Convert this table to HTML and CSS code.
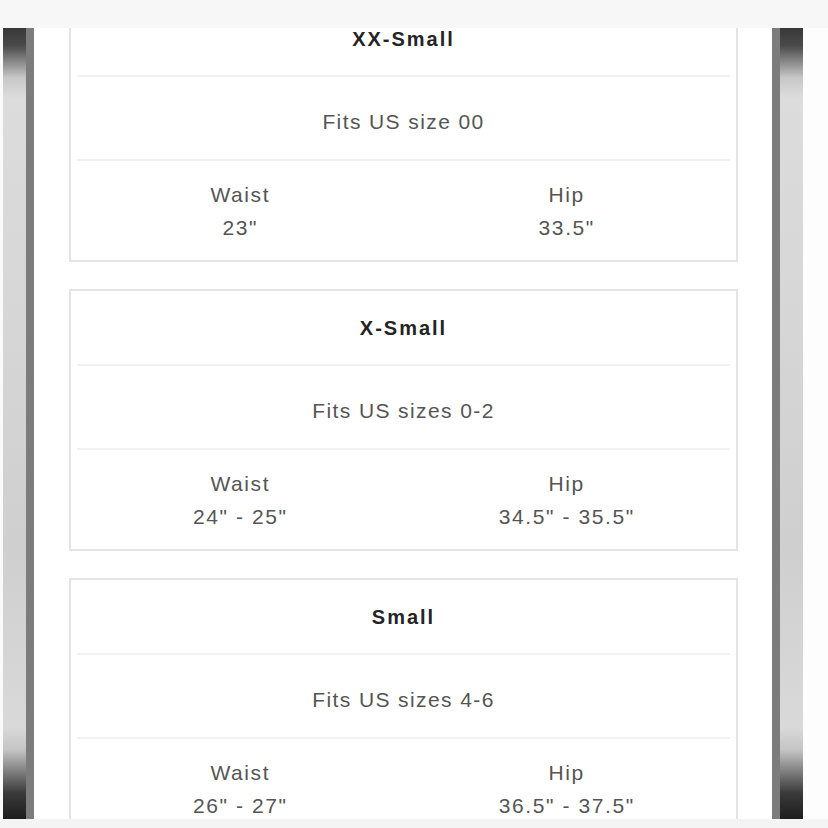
FILE: index.html
```html
<!DOCTYPE html>
<html lang="en">
<head>
<meta charset="utf-8">
<title>Size chart</title>
<link rel="stylesheet" href="styles.css">
</head>
<body>
<div class="topband"></div>
<div class="frame">
  <div class="edge"></div>
  <div class="bezel"></div>
  <div class="strip"></div>
  <div class="screen">
    <div class="cards">
      <section class="card">
        <h2 class="card-title">XX-Small</h2>
        <div class="fits">Fits US size 00</div>
        <div class="measures">
          <div class="measure"><span>Waist</span><span>23"</span></div>
          <div class="measure"><span>Hip</span><span>33.5"</span></div>
        </div>
      </section>
      <section class="card">
        <h2 class="card-title">X-Small</h2>
        <div class="fits">Fits US sizes 0-2</div>
        <div class="measures">
          <div class="measure"><span>Waist</span><span>24" - 25"</span></div>
          <div class="measure"><span>Hip</span><span>34.5" - 35.5"</span></div>
        </div>
      </section>
      <section class="card">
        <h2 class="card-title">Small</h2>
        <div class="fits">Fits US sizes 4-6</div>
        <div class="measures">
          <div class="measure"><span>Waist</span><span>26" - 27"</span></div>
          <div class="measure"><span>Hip</span><span>36.5" - 37.5"</span></div>
        </div>
      </section>
    </div>
  </div>
  <div class="strip"></div>
  <div class="bezel"></div>
  <div class="edge-right"></div>
</div>
<div class="bottomband"></div>
</body>
</html>
```
FILE: styles.css
```css
* { box-sizing: border-box; }
html, body { margin: 0; padding: 0; }
body {
  background: #ffffff;
  font-family: "Liberation Sans", Arial, sans-serif;
  width: 828px;
  height: 828px;
  overflow: hidden;
}
.topband {
  height: 28px;
  background: #f7f7f7;
}
.bottomband {
  height: 9px;
  background: #f4f4f4;
}
.frame {
  display: flex;
  height: 791px;
  overflow: hidden;
}
.edge { width: 3px; background: #fafafa; }
.edge-right { flex: 1; background: #fdfdfd; }
.bezel {
  width: 23px;
  background: linear-gradient(to bottom,
    #383838 0px, #4a4a4a 18px, #8a8a8a 34px, #c8c8c8 50px, #dcdcdc 70px,
    #d6d6d6 300px, #cfcfcf 520px, #d9d9d9 700px,
    #c4c4c4 722px, #7a7a7a 745px, #3a3a3a 765px, #1e1e1e 791px);
}
.strip {
  width: 8px;
  background: #7c7c7c;
}
.screen {
  width: 738px;
  background: #ffffff;
  padding: 0 34px 0 35px;
  overflow: hidden;
}
.cards {
  margin-top: -28px;
  display: flex;
  flex-direction: column;
  gap: 27px;
}
.card {
  border: 2px solid #e4e4e4;
  height: 262px;
  display: flex;
  flex-direction: column;
  background: #fff;
}
.card-title {
  margin: 0 6px;
  height: 75px;
  padding-top: 26px;
  border-bottom: 2px solid #f1f1f1;
  text-align: center;
  font-size: 20px;
  line-height: 22px;
  font-weight: 700;
  letter-spacing: 2px;
  color: #242424;
}
.fits {
  margin: 0 6px;
  height: 84px;
  padding-top: 33px;
  border-bottom: 2px solid #f1f1f1;
  text-align: center;
  font-size: 21px;
  line-height: 24px;
  letter-spacing: 1.4px;
  color: #555;
}
.measures {
  flex: 1;
  margin: 0 6px;
  display: grid;
  grid-template-columns: 1fr 1fr;
  padding-top: 17px;
}
.measure {
  display: flex;
  flex-direction: column;
  align-items: center;
  font-size: 21px;
  line-height: 33px;
  letter-spacing: 1.6px;
  color: #555;
}
```
